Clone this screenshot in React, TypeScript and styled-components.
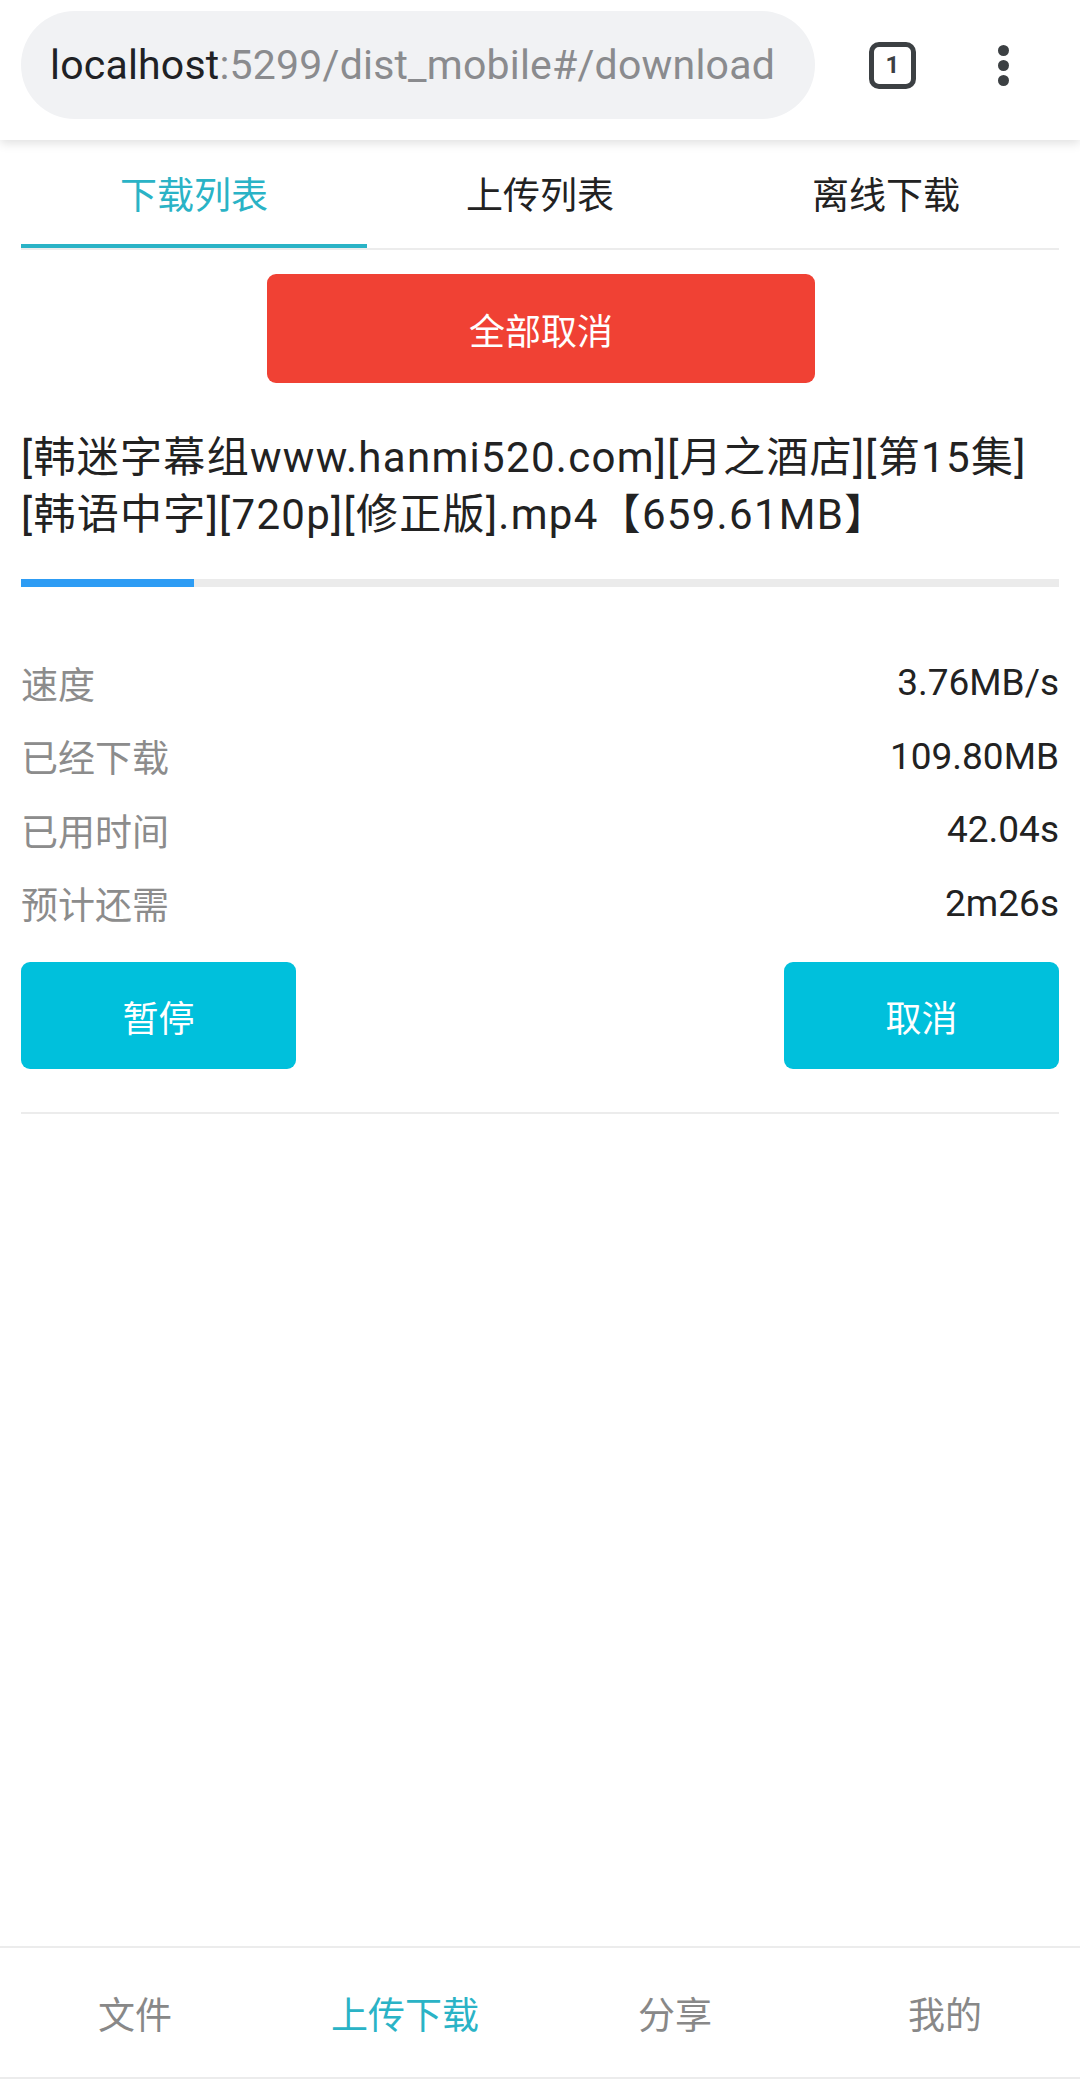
import styled, { createGlobalStyle } from "styled-components";

const GlobalStyle = createGlobalStyle`
  html, body {
    margin: 0;
    padding: 0;
    background: #fff;
  }
  body {
    font-family: Roboto, "Noto Sans CJK SC", sans-serif;
  }
`;

const Page = styled.div`
  display: flex;
  flex-direction: column;
  width: 1080px;
  height: 2081px;
  background: #fff;
  overflow: hidden;
`;

const BrowserBar = styled.header`
  position: relative;
  z-index: 2;
  display: flex;
  align-items: center;
  height: 140px;
  padding: 0 21px 10px;
  box-sizing: border-box;
  background: #fff;
  box-shadow: 0 3px 10px rgba(0, 0, 0, 0.13);
`;

const UrlPill = styled.div`
  display: flex;
  align-items: center;
  width: 794px;
  height: 108px;
  padding-left: 29px;
  box-sizing: border-box;
  border-radius: 54px;
  background: #f1f2f4;
  font-family: Roboto, sans-serif;
  font-size: 41px;
  letter-spacing: 0.2px;
  white-space: nowrap;
  overflow: hidden;
`;

const Host = styled.span`
  color: #202124;
`;

const Path = styled.span`
  color: #8a8b8e;
`;

const TabCount = styled.div`
  display: flex;
  align-items: center;
  justify-content: center;
  width: 47px;
  height: 47px;
  margin-left: 54px;
  box-sizing: border-box;
  border: 5px solid #3c4043;
  border-radius: 10px;
  color: #3c4043;
  font-family: Roboto, sans-serif;
  font-size: 24px;
  font-weight: 700;
`;

const MenuDots = styled.div`
  display: flex;
  flex-direction: column;
  gap: 4px;
  margin-left: 82px;
`;

const Dot = styled.span`
  width: 11px;
  height: 11px;
  border-radius: 50%;
  background: #3c4043;
`;

const Tabs = styled.nav`
  display: grid;
  grid-template-columns: repeat(3, 1fr);
  height: 108px;
  margin: 0 21px;
  border-bottom: 2px solid #ececec;
`;

const Tab = styled.div<{ $active?: boolean }>`
  position: relative;
  display: flex;
  align-items: center;
  justify-content: center;
  padding-bottom: 2px;
  font-size: 37px;
  color: ${(p) => (p.$active ? "#2ab3c6" : "#222")};

  &::after {
    content: "";
    position: absolute;
    left: 0;
    right: 0;
    bottom: 0;
    height: 4px;
    background: ${(p) => (p.$active ? "#2ab3c6" : "transparent")};
  }
`;

const Content = styled.main`
  flex: 1;
  display: flex;
  flex-direction: column;
  padding: 24px 21px 0;
`;

const CancelAll = styled.button`
  align-self: center;
  width: 548px;
  height: 109px;
  margin-left: 2px;
  border: none;
  border-radius: 9px;
  background: #f04134;
  color: #fff;
  font-family: inherit;
  font-size: 36px;
`;

const Title = styled.div`
  margin-top: 46px;
  font-size: 42px;
  line-height: 57px;
  letter-spacing: 1.3px;
  color: #222;
`;

const Progress = styled.div`
  height: 8px;
  margin-top: 36px;
  background: #ebebeb;
`;

const ProgressFill = styled.div`
  height: 100%;
  background: #2d9cf4;
`;

const Stats = styled.div`
  display: flex;
  flex-direction: column;
  margin-top: 59px;
`;

const StatRow = styled.div`
  display: flex;
  align-items: center;
  justify-content: space-between;
  height: 73.5px;
  font-size: 37px;
`;

const StatLabel = styled.span`
  color: #8c8c8c;
`;

const StatValue = styled.span`
  color: #222;
`;

const Actions = styled.div`
  display: flex;
  justify-content: space-between;
  margin-top: 22px;
`;

const ActionButton = styled.button`
  width: 275px;
  height: 107px;
  border: none;
  border-radius: 9px;
  background: #00c0dc;
  color: #fff;
  font-family: inherit;
  font-size: 36px;
`;

const Divider = styled.hr`
  margin: 43px 0 0;
  border: none;
  border-top: 2px solid #ececec;
`;

const BottomNav = styled.footer`
  display: grid;
  grid-template-columns: repeat(4, 1fr);
  height: 129px;
  margin-bottom: 2px;
  border-top: 2px solid #ececec;
  border-bottom: 2px solid #ececec;
`;

const NavItem = styled.div<{ $active?: boolean }>`
  display: flex;
  align-items: center;
  justify-content: center;
  font-size: 37px;
  color: ${(p) => (p.$active ? "#2ab3c6" : "#888")};
`;

const stats = [
  { label: "速度", value: "3.76MB/s" },
  { label: "已经下载", value: "109.80MB" },
  { label: "已用时间", value: "42.04s" },
  { label: "预计还需", value: "2m26s" },
];

export default function App() {
  const percent = (109.8 / 659.61) * 100;

  return (
    <Page>
      <GlobalStyle />
      <BrowserBar>
        <UrlPill>
          <Host>localhost</Host>
          <Path>:5299/dist_mobile#/download</Path>
        </UrlPill>
        <TabCount>1</TabCount>
        <MenuDots>
          <Dot />
          <Dot />
          <Dot />
        </MenuDots>
      </BrowserBar>

      <Tabs>
        <Tab $active>下载列表</Tab>
        <Tab>上传列表</Tab>
        <Tab>离线下载</Tab>
      </Tabs>

      <Content>
        <CancelAll>全部取消</CancelAll>
        <Title>
          [韩迷字幕组www.hanmi520.com][月之酒店][第15集][韩语中字][720p][修正版].mp4【659.61MB】
        </Title>
        <Progress>
          <ProgressFill style={{ width: `${percent}%` }} />
        </Progress>
        <Stats>
          {stats.map((s) => (
            <StatRow key={s.label}>
              <StatLabel>{s.label}</StatLabel>
              <StatValue>{s.value}</StatValue>
            </StatRow>
          ))}
        </Stats>
        <Actions>
          <ActionButton>暂停</ActionButton>
          <ActionButton>取消</ActionButton>
        </Actions>
        <Divider />
      </Content>

      <BottomNav>
        <NavItem>文件</NavItem>
        <NavItem $active>上传下载</NavItem>
        <NavItem>分享</NavItem>
        <NavItem>我的</NavItem>
      </BottomNav>
    </Page>
  );
}
